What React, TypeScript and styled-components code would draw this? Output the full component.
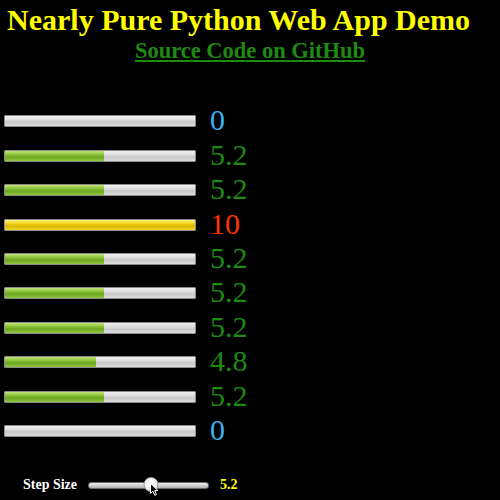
import React from 'react';
import styled, { createGlobalStyle } from 'styled-components';

const GlobalStyle = createGlobalStyle`
  html, body {
    margin: 0;
    padding: 0;
    background: #000;
  }
  body {
    font-family: 'Liberation Serif', 'Times New Roman', serif;
  }
`;

const Page = styled.div`
  width: 500px;
  height: 500px;
  background: #000;
  display: flex;
  flex-direction: column;
  overflow: hidden;
`;

const Title = styled.h1`
  margin: 0;
  padding: 3px 0 0 7px;
  font-size: 30px;
  line-height: 34px;
  font-weight: bold;
  color: #ffff00;
  white-space: nowrap;
`;

const SourceLink = styled.a`
  align-self: center;
  margin-top: 1px;
  font-size: 22.5px;
  line-height: 26px;
  font-weight: bold;
  color: #1d8a12;
  text-decoration: underline;
`;

const Bars = styled.div`
  display: flex;
  flex-direction: column;
  margin-top: 40px;
  padding-left: 4px;
`;

const Row = styled.div`
  display: flex;
  align-items: center;
  height: 34.45px;
  gap: 14px;
`;

const Track = styled.div`
  position: relative;
  width: 190px;
  height: 10px;
  border: 1px solid #8a8a8a;
  border-radius: 1px;
  background: linear-gradient(#f2f2f2 0%, #dcdcdc 40%, #c8c8c8 60%, #dedede 100%);
  overflow: hidden;
`;

const Fill = styled.div<{ $full: boolean }>`
  height: 100%;
  background: ${(p) =>
    p.$full
      ? 'linear-gradient(#fff07a 0%, #f2d41c 35%, #dcb800 60%, #f0d630 100%)'
      : 'linear-gradient(#c4e47a 0%, #8cc43a 35%, #6ea51f 60%, #8fc63e 100%)'};
`;

const Value = styled.span<{ $color: string }>`
  font-size: 30px;
  line-height: 34px;
  color: ${(p) => p.$color};
  margin-top: -2px;
`;

const Controls = styled.div`
  display: flex;
  align-items: center;
  margin-top: 28px;
  padding-left: 23px;
  gap: 11px;
`;

const Label = styled.span`
  font-size: 14px;
  font-weight: bold;
  color: #fff;
`;

const SliderBox = styled.div`
  position: relative;
  width: 121px;
  height: 18px;
  display: flex;
  align-items: center;
`;

const SliderTrack = styled.div`
  width: 100%;
  height: 5px;
  border-radius: 3px;
  background: linear-gradient(#f0f0f0, #b0b0b0);
  border: 1px solid #6a6a6a;
`;

const Thumb = styled.div`
  position: absolute;
  top: 1px;
  width: 15px;
  height: 15px;
  border-radius: 50%;
  background: radial-gradient(circle at 45% 40%, #ffffff 0%, #f0f0f0 55%, #c8c8c8 100%);
  border: 1px solid #9a9a9a;
  box-sizing: border-box;
  transform: translateX(-50%);
`;

const Cursor = styled.svg`
  position: absolute;
  top: 7px;
  width: 9px;
  height: 13px;
`;

const StepValue = styled.span`
  font-size: 14px;
  font-weight: bold;
  color: #ffff00;
`;

const values = [0, 5.2, 5.2, 10, 5.2, 5.2, 5.2, 4.8, 5.2, 0];

const colorFor = (v: number) => {
  if (v === 0) return '#3ab2ef';
  if (v >= 10) return '#ff3300';
  return '#1d8a12';
};

export default function App() {
  const step = 5.2;
  const pos = (step / 10) * 121;

  return (
    <>
      <GlobalStyle />
      <Page>
        <Title>Nearly Pure Python Web App Demo</Title>
        <SourceLink href="#">Source Code on GitHub</SourceLink>
        <Bars>
          {values.map((v, i) => (
            <Row key={i}>
              <Track>
                <Fill $full={v >= 10} style={{ width: `${v * 10}%` }} />
              </Track>
              <Value $color={colorFor(v)}>{v}</Value>
            </Row>
          ))}
        </Bars>
        <Controls>
          <Label>Step Size</Label>
          <SliderBox>
            <SliderTrack />
            <Thumb style={{ left: `${pos}px` }} />
            <Cursor viewBox="0 0 9 13" style={{ left: `${pos - 1}px` }}>
              <path d="M0.5 0.5 L0.5 10.5 L3 8.2 L4.8 12.3 L6.4 11.6 L4.7 7.6 L8 7.6 Z" fill="#000" stroke="#fff" strokeWidth="1" />
            </Cursor>
          </SliderBox>
          <StepValue>{step}</StepValue>
        </Controls>
      </Page>
    </>
  );
}
